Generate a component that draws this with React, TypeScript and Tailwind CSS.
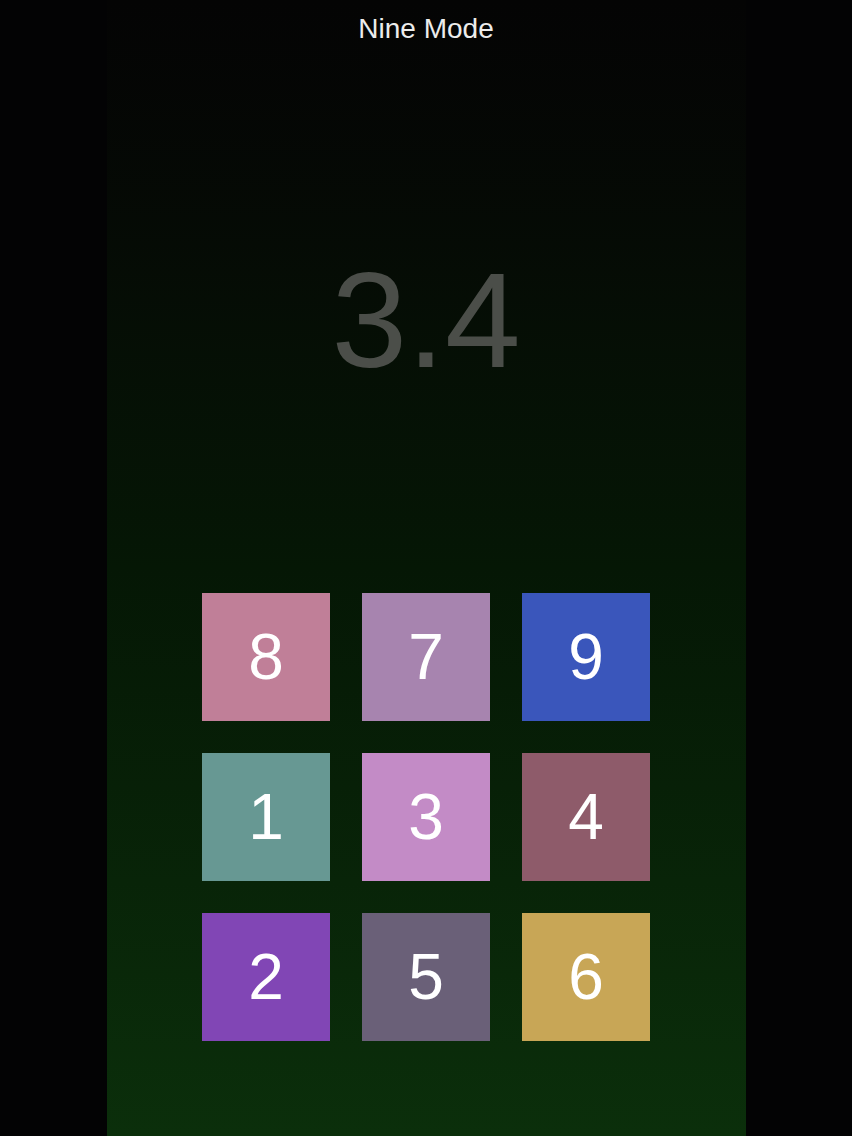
const TILES = [
  { n: 8, bg: "bg-[#c07f98]" },
  { n: 7, bg: "bg-[#a784af]" },
  { n: 9, bg: "bg-[#3a56bb]" },
  { n: 1, bg: "bg-[#679893]" },
  { n: 3, bg: "bg-[#c38bc6]" },
  { n: 4, bg: "bg-[#8e5b6a]" },
  { n: 2, bg: "bg-[#8146b5]" },
  { n: 5, bg: "bg-[#6a6078]" },
  { n: 6, bg: "bg-[#c8a656]" },
];

export default function App() {
  return (
    <div className="h-[1136px] w-full overflow-hidden bg-[#030304] font-['Liberation_Sans',Arial,sans-serif]">
      <div className="mx-auto flex h-full w-[639px] flex-col items-center bg-gradient-to-b from-[#040404] via-[#051705] to-[#0b2f0b]">
        <h1 className="pt-[15px] text-[28px] leading-none text-[#ececec]">Nine Mode</h1>

        <div className="mt-[209px] text-[136px] leading-none text-[#4b4e49]">3.4</div>

        <div className="mt-[205px] grid grid-cols-3 gap-8">
          {TILES.map((t) => (
            <div
              key={t.n}
              className={`flex h-32 w-32 items-center justify-center text-[64px] leading-none text-white ${t.bg}`}
            >
              {t.n}
            </div>
          ))}
        </div>
      </div>
    </div>
  );
}
